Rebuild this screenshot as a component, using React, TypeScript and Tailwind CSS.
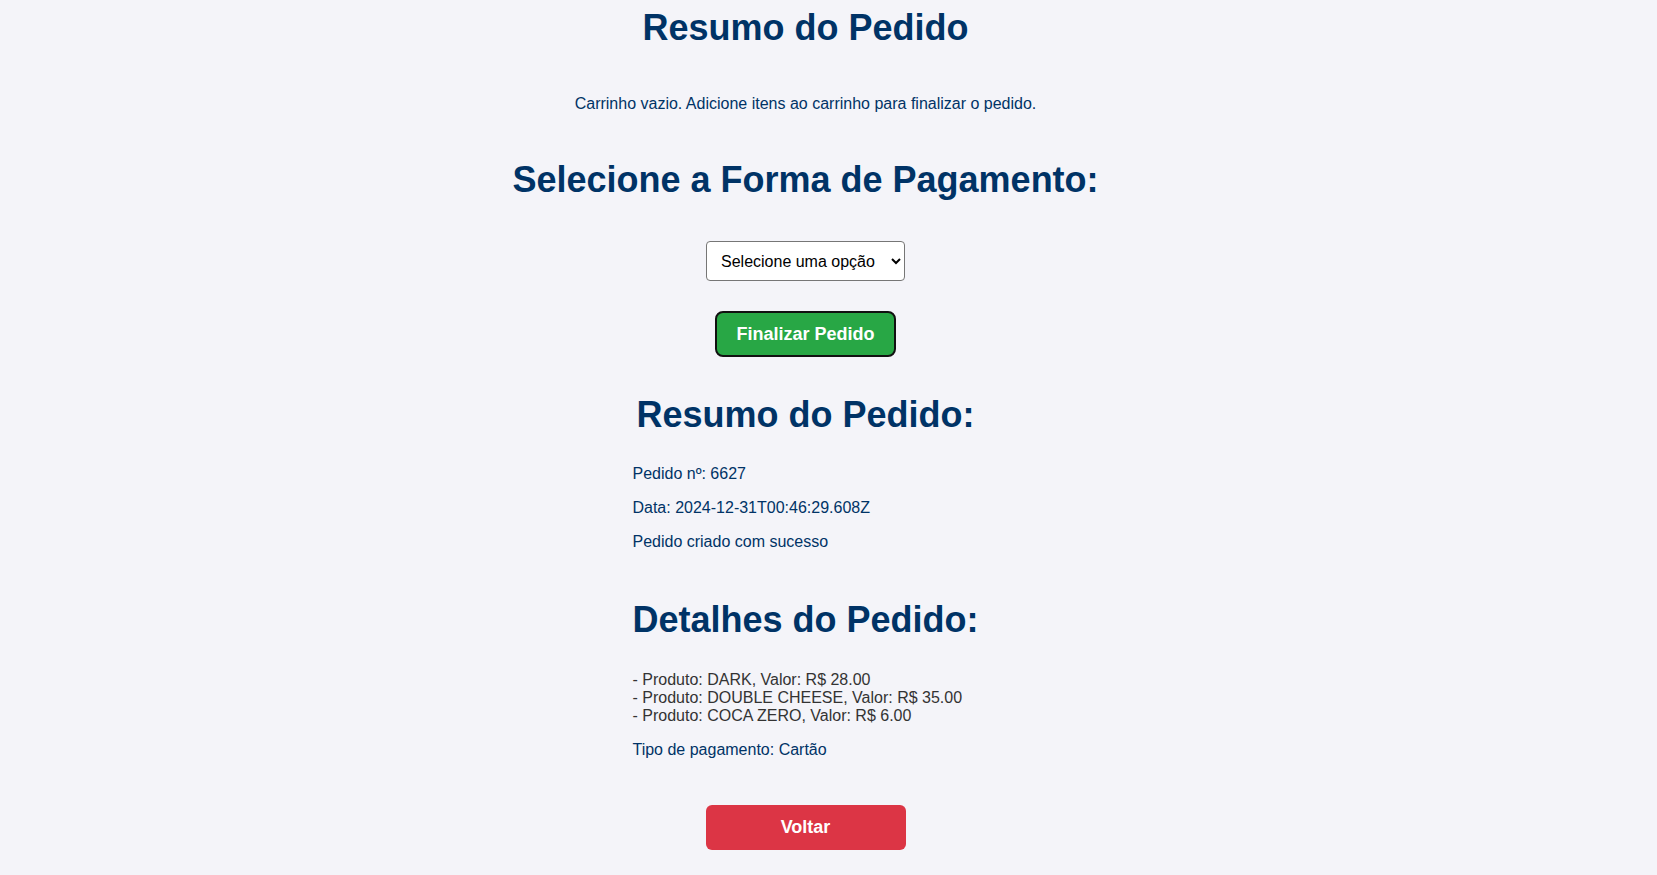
import { useState } from "react";

const itens = [
    { produto: "DARK", valor: 28 },
    { produto: "DOUBLE CHEESE", valor: 35 },
    { produto: "COCA ZERO", valor: 6 },
];

const App = () => {
    const [pagamento, setPagamento] = useState("");

    return (
        <div
            className="min-h-screen bg-[#f4f4f9] text-[#003366] flex flex-col items-center pr-[46px]"
            style={{ fontFamily: '"Liberation Sans", Arial, sans-serif' }}
        >
            <h1 className="mt-[7px] text-[36px] leading-[41px] font-bold">Resumo do Pedido</h1>

            <p className="mt-[47px] text-[16px] leading-[18px]">
                Carrinho vazio. Adicione itens ao carrinho para finalizar o pedido.
            </p>

            <h2 className="mt-[46px] text-[36px] leading-[41px] font-bold">Selecione a Forma de Pagamento:</h2>

            <select
                value={pagamento}
                onChange={(e) => setPagamento(e.target.value)}
                className="mt-[41px] w-[199px] h-[40px] pl-[10px] pr-2 text-[16px] text-black bg-white border border-[#767676] rounded-[4px]"
            >
                <option value="">Selecione uma opção</option>
                <option value="cartao">Cartão</option>
                <option value="pix">Pix</option>
                <option value="dinheiro">Dinheiro</option>
            </select>

            <button className="mt-[30px] w-[181px] h-[46px] bg-[#28a745] border-2 border-[#111] rounded-[8px] text-white text-[18px] font-bold leading-[22px] cursor-pointer">
                Finalizar Pedido
            </button>

            <div className="w-fit">
                <h2 className="mt-[37px] text-[36px] leading-[41px] font-bold text-center">Resumo do Pedido:</h2>
                <p className="mt-[30px] text-[16px] leading-[18px]">Pedido nº: 6627</p>
                <p className="mt-[16px] text-[16px] leading-[18px]">Data: 2024-12-31T00:46:29.608Z</p>
                <p className="mt-[16px] text-[16px] leading-[18px]">Pedido criado com sucesso</p>

                <h2 className="mt-[48px] text-[36px] leading-[41px] font-bold text-center">Detalhes do Pedido:</h2>
                <div className="mt-[31px] text-[16px] leading-[18px] text-[#333]">
                    {itens.map((item, index) => (
                        <div key={index}>
                            - Produto: {item.produto}, Valor: R$ {item.valor.toFixed(2)}
                        </div>
                    ))}
                </div>
                <p className="mt-[16px] text-[16px] leading-[18px]">Tipo de pagamento: Cartão</p>
            </div>

            <button className="mt-[46px] mb-[25px] w-[200px] h-[45px] bg-[#dc3545] rounded-[6px] text-white text-[18px] font-bold cursor-pointer">
                Voltar
            </button>
        </div>
    );
};

export default App;
